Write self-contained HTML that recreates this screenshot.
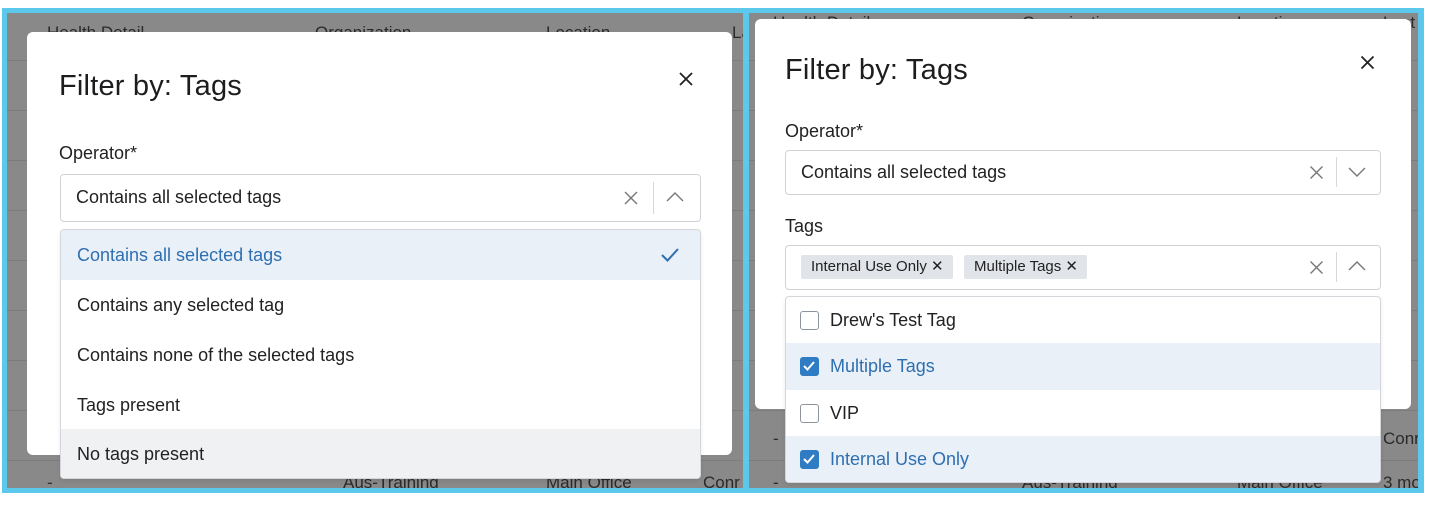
<!DOCTYPE html>
<html><head><style>
*{margin:0;padding:0;box-sizing:border-box}
body{width:1431px;height:506px;background:#fff;position:relative;overflow:hidden;font-family:"Liberation Sans",sans-serif;color:#1d1d1f}
.a{position:absolute}
.cy{background:#5bc8ec}
.gray{background:#898989;overflow:hidden}
.th{position:absolute;font-size:17px;color:#2a2a2a;white-space:nowrap}
.ln{position:absolute;left:0;right:0;height:1px;background:#7c7c7c}
.modal{background:#fff;border-radius:6px}
.title{font-size:29px;color:#1d1d1f;letter-spacing:0.2px}
.lbl{font-size:18px;color:#222}
.sel{background:#fff;border:1px solid #cfd3d8;border-radius:4px}
.txt{font-size:18px;color:#222;white-space:nowrap}
.menu{background:#fff;border:1px solid #d3d6da;border-radius:4px;overflow:hidden;box-shadow:0 2px 4px rgba(0,0,0,.08)}
.it{position:absolute;left:0;right:0;font-size:18px;color:#222;padding-left:16px;display:flex;align-items:center}
.chip{position:absolute;background:#e1e4e8;border-radius:2px;font-size:15px;color:#222;padding:0 9px 0 10px;height:24px;line-height:24px;white-space:nowrap}
.cb{width:19px;height:19px;border:1.5px solid #8d949c;border-radius:3px;background:#fff;margin-right:11px;margin-left:-2px}
.cb.on{background:#2f7bc4;border-color:#2f7bc4}
</style></head><body>
<div class="a cy" style="left:2px;top:8px;width:1422px;height:485px"></div>
<div class="a gray" style="left:7px;top:13px;width:736px;height:475px">
  <div class="th" style="left:40px;top:10px">Health Detail</div>
  <div class="th" style="left:308px;top:10px">Organization</div>
  <div class="th" style="left:539px;top:10px">Location</div>
  <div class="th" style="left:725px;top:10px">Last</div>
  <div class="ln" style="top:47px"></div><div class="ln" style="top:97px"></div><div class="ln" style="top:147px"></div><div class="ln" style="top:197px"></div><div class="ln" style="top:247px"></div><div class="ln" style="top:297px"></div><div class="ln" style="top:347px"></div><div class="ln" style="top:397px"></div><div class="ln" style="top:447px"></div>
  <div class="th" style="left:40px;top:460px">-</div>
  <div class="th" style="left:336px;top:460px">Aus-Training</div>
  <div class="th" style="left:539px;top:460px">Main Office</div>
  <div class="th" style="left:696px;top:460px">Conr</div>
</div>
<div class="a gray" style="left:749px;top:13px;width:669px;height:475px">
  <div class="th" style="left:24px;top:0px">Health Detail</div>
  <div class="th" style="left:273px;top:0px">Organization</div>
  <div class="th" style="left:488px;top:0px">Location</div>
  <div class="th" style="left:634px;top:0px">Last</div>
  <div class="ln" style="top:47px"></div><div class="ln" style="top:97px"></div><div class="ln" style="top:147px"></div><div class="ln" style="top:197px"></div><div class="ln" style="top:247px"></div><div class="ln" style="top:297px"></div><div class="ln" style="top:347px"></div><div class="ln" style="top:397px"></div><div class="ln" style="top:447px"></div>
  <div class="th" style="left:24px;top:416px">-</div>
  <div class="th" style="left:634px;top:416px">Conr</div>
  <div class="th" style="left:24px;top:460px">-</div>
  <div class="th" style="left:273px;top:460px">Aus-Training</div>
  <div class="th" style="left:488px;top:460px">Main Office</div>
  <div class="th" style="left:634px;top:460px">3 mo</div>
</div>

<div class="a modal" style="left:27px;top:32px;width:705px;height:423px"></div>
<div class="a title" style="left:59px;top:70px">Filter by: Tags</div>
<svg class="a" style="left:678px;top:71px" width="16" height="16"><path d="M2 2L14 14M14 2L2 14" stroke="#222" stroke-width="1.8"/></svg>
<div class="a lbl" style="left:59px;top:143px">Operator*</div>
<div class="a sel" style="left:60px;top:174px;width:641px;height:48px"></div>
<div class="a txt" style="left:76px;top:187px">Contains all selected tags</div>
<svg class="a" style="left:623px;top:190px" width="16" height="16"><path d="M2 2L14 14M14 2L2 14" stroke="#777" stroke-width="1.4"/></svg>
<div class="a" style="left:653px;top:182px;width:1px;height:32px;background:#d5d8dc"></div>
<svg class="a" style="left:665px;top:190px" width="20" height="14"><path d="M2 11L10 3L18 11" stroke="#777" stroke-width="1.4" fill="none"/></svg>
<div class="a menu" style="left:60px;top:229px;width:641px;height:250px">
  <div class="it" style="top:0;height:50px;background:#e9f0f8;color:#2f6fb0">Contains all selected tags
    <svg style="position:absolute;right:20px;top:17px" width="20" height="16"><path d="M2 8L7.5 13.5L18 2" stroke="#2f6fb0" stroke-width="2" fill="none"/></svg></div>
  <div class="it" style="top:50px;height:50px">Contains any selected tag</div>
  <div class="it" style="top:100px;height:50px">Contains none of the selected tags</div>
  <div class="it" style="top:150px;height:50px">Tags present</div>
  <div class="it" style="top:199px;height:50px;background:#f0f1f3">No tags present</div>
</div>

<div class="a modal" style="left:755px;top:19px;width:656px;height:390px"></div>
<div class="a title" style="left:785px;top:54px">Filter by: Tags</div>
<svg class="a" style="left:1360px;top:55px" width="15" height="15"><path d="M1.5 1.5L13.5 13.5M13.5 1.5L1.5 13.5" stroke="#222" stroke-width="1.8"/></svg>
<div class="a lbl" style="left:785px;top:121px">Operator*</div>
<div class="a sel" style="left:785px;top:150px;width:596px;height:45px"></div>
<div class="a txt" style="left:801px;top:162px">Contains all selected tags</div>
<svg class="a" style="left:1309px;top:165px" width="15" height="15"><path d="M1.5 1.5L13.5 13.5M13.5 1.5L1.5 13.5" stroke="#777" stroke-width="1.4"/></svg>
<div class="a" style="left:1336px;top:157px;width:1px;height:30px;background:#d5d8dc"></div>
<svg class="a" style="left:1347px;top:166px" width="20" height="12"><path d="M2 2L10 10L18 2" stroke="#777" stroke-width="1.4" fill="none"/></svg>
<div class="a lbl" style="left:785px;top:216px">Tags</div>
<div class="a sel" style="left:785px;top:245px;width:596px;height:45px"></div>
<div class="chip" style="left:801px;top:255px">Internal Use Only ✕</div>
<div class="chip" style="left:964px;top:255px">Multiple Tags ✕</div>
<svg class="a" style="left:1309px;top:260px" width="15" height="15"><path d="M1.5 1.5L13.5 13.5M13.5 1.5L1.5 13.5" stroke="#777" stroke-width="1.4"/></svg>
<div class="a" style="left:1336px;top:252px;width:1px;height:30px;background:#d5d8dc"></div>
<svg class="a" style="left:1347px;top:260px" width="20" height="12"><path d="M2 10L10 2L18 10" stroke="#777" stroke-width="1.4" fill="none"/></svg>
<div class="a menu" style="left:785px;top:296px;width:596px;height:187px">
  <div class="it" style="top:0;height:46px"><span class="cb"></span>Drew's Test Tag</div>
  <div class="it" style="top:46px;height:47px;background:#e9f0f8;color:#2f6fb0"><span class="cb on"><svg width="16" height="16" style="display:block"><path d="M3 8L6.5 11.5L13 4" stroke="#fff" stroke-width="2" fill="none"/></svg></span>Multiple Tags</div>
  <div class="it" style="top:93px;height:46px"><span class="cb"></span>VIP</div>
  <div class="it" style="top:139px;height:47px;background:#e9f0f8;color:#2f6fb0"><span class="cb on"><svg width="16" height="16" style="display:block"><path d="M3 8L6.5 11.5L13 4" stroke="#fff" stroke-width="2" fill="none"/></svg></span>Internal Use Only</div>
</div>
</body></html>
